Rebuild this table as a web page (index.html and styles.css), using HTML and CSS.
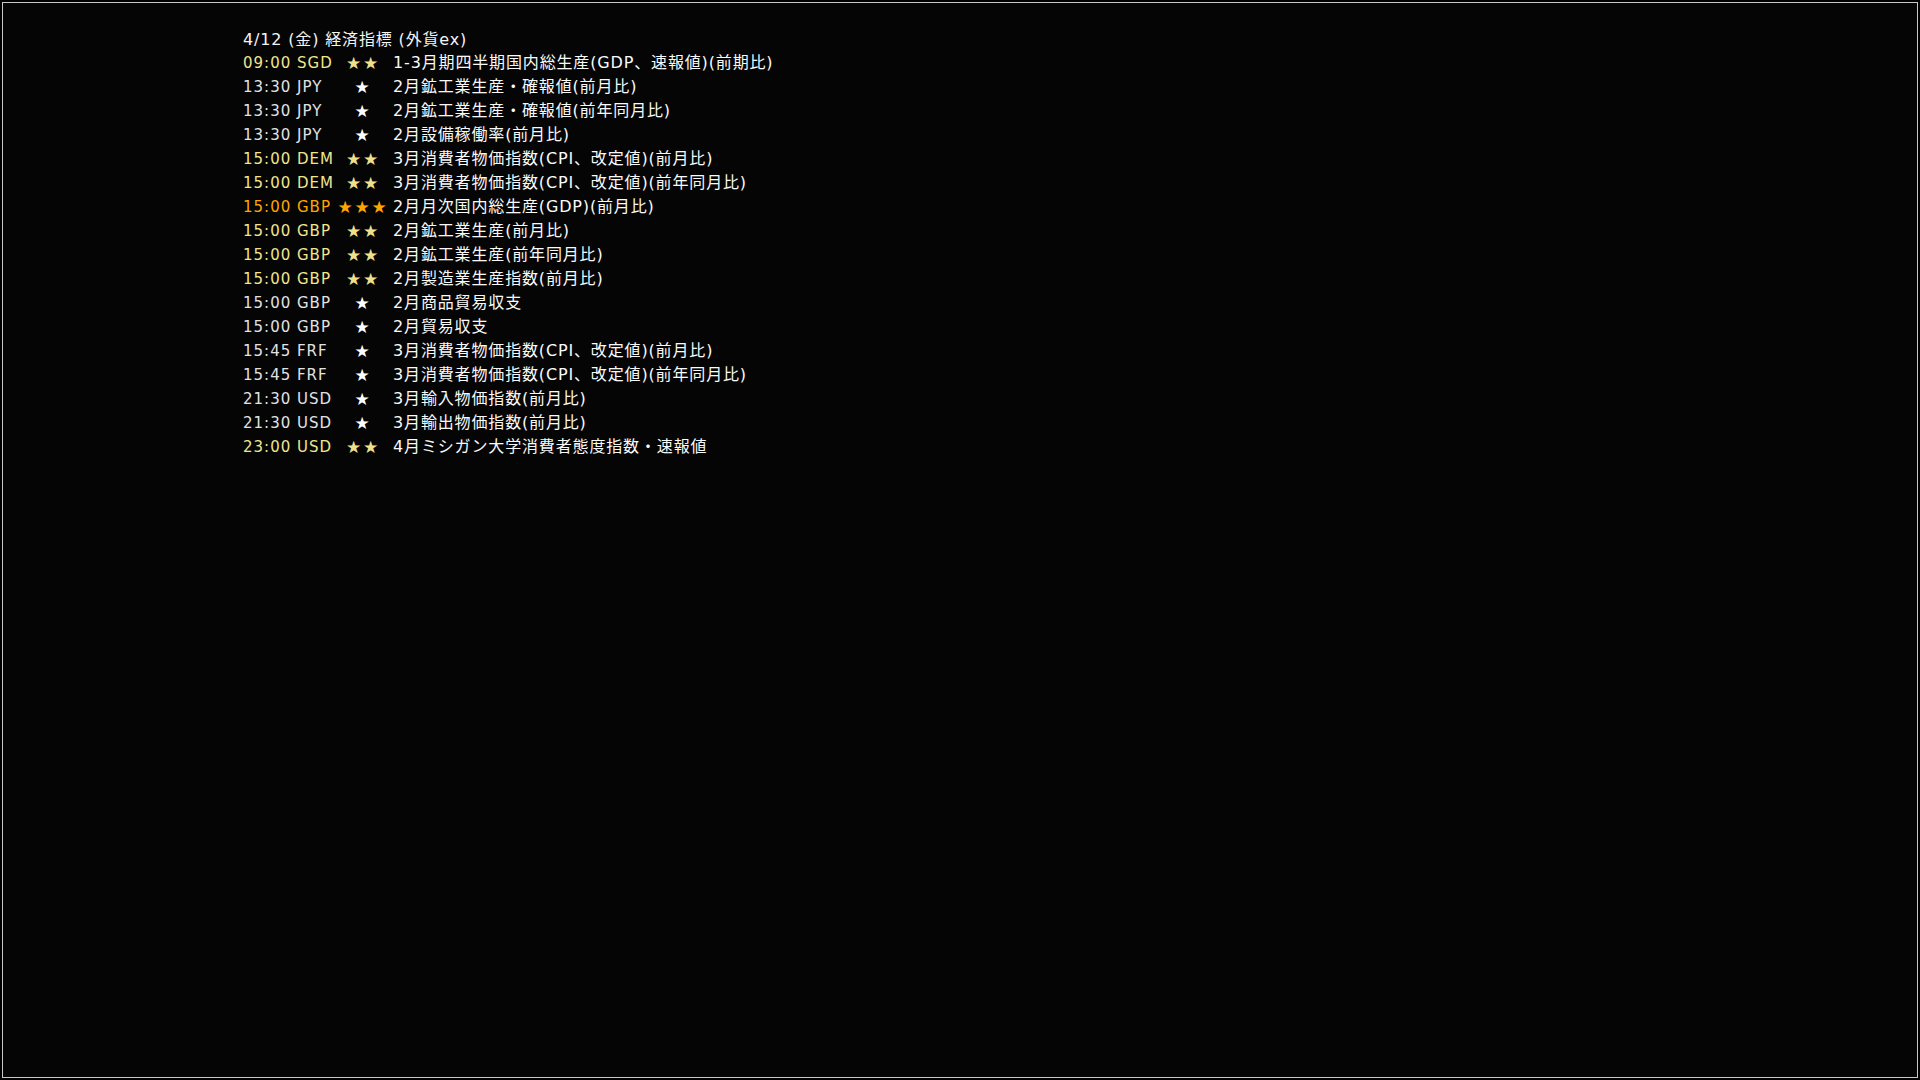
FILE: index.html
```html
<!DOCTYPE html>
<html lang="ja">
<head>
<meta charset="utf-8">
<title>経済指標</title>
<link rel="stylesheet" href="styles.css">
</head>
<body>
<div class="frame">
  <div class="panel">
    <div class="title">4/12 (金) 経済指標 (外貨ex)</div>
    <div class="list">
      <div class="row lv2"><span class="time">09:00 SGD</span><span class="stars">★★</span><span class="desc">1-3月期四半期国内総生産(GDP、速報値)(前期比)</span></div>
      <div class="row lv1"><span class="time">13:30 JPY</span><span class="stars">★</span><span class="desc">2月鉱工業生産・確報値(前月比)</span></div>
      <div class="row lv1"><span class="time">13:30 JPY</span><span class="stars">★</span><span class="desc">2月鉱工業生産・確報値(前年同月比)</span></div>
      <div class="row lv1"><span class="time">13:30 JPY</span><span class="stars">★</span><span class="desc">2月設備稼働率(前月比)</span></div>
      <div class="row lv2"><span class="time">15:00 DEM</span><span class="stars">★★</span><span class="desc">3月消費者物価指数(CPI、改定値)(前月比)</span></div>
      <div class="row lv2"><span class="time">15:00 DEM</span><span class="stars">★★</span><span class="desc">3月消費者物価指数(CPI、改定値)(前年同月比)</span></div>
      <div class="row lv3"><span class="time">15:00 GBP</span><span class="stars">★★★</span><span class="desc">2月月次国内総生産(GDP)(前月比)</span></div>
      <div class="row lv2"><span class="time">15:00 GBP</span><span class="stars">★★</span><span class="desc">2月鉱工業生産(前月比)</span></div>
      <div class="row lv2"><span class="time">15:00 GBP</span><span class="stars">★★</span><span class="desc">2月鉱工業生産(前年同月比)</span></div>
      <div class="row lv2"><span class="time">15:00 GBP</span><span class="stars">★★</span><span class="desc">2月製造業生産指数(前月比)</span></div>
      <div class="row lv1"><span class="time">15:00 GBP</span><span class="stars">★</span><span class="desc">2月商品貿易収支</span></div>
      <div class="row lv1"><span class="time">15:00 GBP</span><span class="stars">★</span><span class="desc">2月貿易収支</span></div>
      <div class="row lv1"><span class="time">15:45 FRF</span><span class="stars">★</span><span class="desc">3月消費者物価指数(CPI、改定値)(前月比)</span></div>
      <div class="row lv1"><span class="time">15:45 FRF</span><span class="stars">★</span><span class="desc">3月消費者物価指数(CPI、改定値)(前年同月比)</span></div>
      <div class="row lv1"><span class="time">21:30 USD</span><span class="stars">★</span><span class="desc">3月輸入物価指数(前月比)</span></div>
      <div class="row lv1"><span class="time">21:30 USD</span><span class="stars">★</span><span class="desc">3月輸出物価指数(前月比)</span></div>
      <div class="row lv2"><span class="time">23:00 USD</span><span class="stars">★★</span><span class="desc">4月ミシガン大学消費者態度指数・速報値</span></div>
    </div>
  </div>
</div>
</body>
</html>
```
FILE: styles.css
```css
* { box-sizing: border-box; }
html, body {
  margin: 0;
  padding: 0;
  background: #000;
}
body {
  width: 1920px;
  height: 1080px;
  font-family: "DejaVu Sans", "Noto Sans CJK JP", sans-serif;
  font-size: 15px;
  color: #f2f2f2;
}
.frame {
  width: 1920px;
  height: 1080px;
  padding: 2px;
}
.panel {
  width: 100%;
  height: 100%;
  border: 1px solid #c8c8c8;
  background: #050505;
  padding: 25px 0 0 240px;
}
.title {
  font-size: 16px;
  line-height: 24px;
  height: 23px;
  letter-spacing: 0.85px;
  color: #f4f4f4;
}
.list {
  display: flex;
  flex-direction: column;
}
.row {
  display: flex;
  align-items: center;
  height: 24px;
  line-height: 24px;
  white-space: nowrap;
}
.time {
  width: 92px;
  letter-spacing: 1px;
}
.stars {
  width: 54px;
  text-align: center;
  font-size: 17px;
  letter-spacing: 1.8px;
  padding-left: 2px;
}
.desc {
  padding-left: 4px;
  font-size: 16px;
  letter-spacing: 0.85px;
  color: #fafafa;
}
.lv1 .time { color: #e2e2e2; }
.lv1 .stars { color: #ffffff; }
.lv2 .time { color: #f0e68c; }
.lv2 .stars { color: #f0e08c; }
.lv3 .time { color: #ffa500; }
.lv3 .stars { color: #ffa500; }
```
